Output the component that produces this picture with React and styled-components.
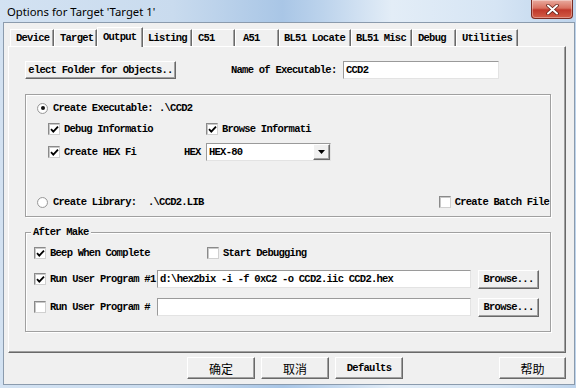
import React from 'react';
import styled, { createGlobalStyle } from 'styled-components';

const MONO = `"Liberation Mono", "DejaVu Sans Mono", monospace`;
const FS = 10.5;
const LS = -0.75;

const Global = createGlobalStyle`
  html, body { margin: 0; padding: 0; width: 576px; height: 388px; overflow: hidden; background: #cddcec; }
  #root { width: 576px; height: 388px; }
  * { box-sizing: border-box; }
`;

const Window = styled.div`
  width: 576px;
  height: 388px;
  display: flex;
  flex-direction: column;
  background: linear-gradient(90deg, #d3e2f2 0%, #c9dbee 30%, #a9c6e6 49%, #bcd3ec 56%, #e3edf7 68%, #d6e5f4 86%, #bed4ec 100%);
`;

const TitleBar = styled.div`
  height: 22px;
  flex-shrink: 0;
  display: flex;
  align-items: flex-start;
`;

const Title = styled.div`
  flex: 1;
  padding-left: 7px;
  font-family: "Noto Sans", "Open Sans", sans-serif;
  font-size: 11.3px;
  line-height: 23px;
  color: #000;
`;

const CloseButton = styled.div`
  width: 42px;
  height: 19px;
  margin-right: 3px;
  border: 1px solid #7a2b22;
  border-top: none;
  border-radius: 0 0 4px 4px;
  background: linear-gradient(180deg, #e9ab9f 0%, #d9705f 45%, #c0392b 55%, #d25d47 100%);
  box-shadow: inset 0 0 0 1px rgba(255, 255, 255, 0.35);
  display: flex;
  align-items: center;
  justify-content: center;
`;

const Client = styled.div`
  flex: 1;
  min-height: 0;
  margin: 0 1px 3px 3px;
  padding: 4px 8px 5px 4px;
  background: #f0f0f0;
  border: 1px solid #8b9bad;
  display: flex;
  flex-direction: column;
`;

const TabRow = styled.div`
  height: 19px;
  flex-shrink: 0;
  display: flex;
  align-items: flex-end;
  padding-left: 2px;
  position: relative;
  z-index: 1;
`;

const Tab = styled.div`
  width: ${(p) => p.$w}px;
  height: ${(p) => (p.$active ? 20 : 17)}px;
  margin-bottom: ${(p) => (p.$active ? -1 : 0)}px;
  padding-left: ${(p) => p.$pad || 5}px;
  padding-top: ${(p) => (p.$active ? 1 : 0)}px;
  background: #f0f0f0;
  border-left: 1px solid #fff;
  border-top: 1px solid #fff;
  border-right: 1px solid #696969;
  box-shadow: inset -1px 0 0 #a0a0a0;
  font-family: ${MONO};
  font-size: ${FS}px;
  letter-spacing: ${LS}px;
  font-weight: bold;
  line-height: 16px;
  color: #000;
  white-space: nowrap;
`;

const Panel = styled.div`
  flex: 1;
  min-height: 0;
  border: 1px solid;
  border-color: #fff #696969 #696969 #fff;
  box-shadow: inset -1px -1px 0 #a0a0a0;
  padding: 14px 14px 0 16px;
  display: flex;
  flex-direction: column;
`;

const Row = styled.div`
  display: flex;
  align-items: center;
  height: ${(p) => p.$h || 16}px;
  margin-top: ${(p) => (p.$auto ? 'auto' : `${p.$mt || 0}px`)};
  margin-left: ${(p) => p.$ml || 0}px;
  flex-shrink: 0;
`;

const Text = styled.span`
  font-family: ${MONO};
  font-size: ${FS}px;
  font-weight: bold;
  letter-spacing: ${LS}px;
  line-height: 16px;
  color: #000;
  white-space: nowrap;
  flex-shrink: 0;
  margin-left: ${(p) => p.$ml || 0}px;
  ${(p) => (p.$w ? `width: ${p.$w}px;` : '')}
`;

const Button = styled.div`
  width: ${(p) => p.$w}px;
  height: ${(p) => p.$h || 18}px;
  margin-left: ${(p) => p.$ml || 0}px;
  flex-shrink: 0;
  background: #f0f0f0;
  border: 1px solid;
  border-color: #fff #696969 #696969 #fff;
  box-shadow: inset -1px -1px 0 #a0a0a0;
  display: flex;
  align-items: center;
  justify-content: center;
  white-space: nowrap;
  font-family: ${(p) => (p.$cjk ? `"Noto Sans CJK SC", "Noto Sans", sans-serif` : MONO)};
  font-size: ${(p) => (p.$cjk ? 12 : FS)}px;
  font-weight: ${(p) => (p.$cjk ? 'normal' : 'bold')};
  letter-spacing: ${(p) => (p.$cjk ? 0 : LS)}px;
  color: #000;
`;

const Field = styled.div`
  width: ${(p) => p.$w}px;
  height: 18px;
  margin-left: ${(p) => p.$ml || 0}px;
  flex-shrink: 0;
  background: #fff;
  border: 1px solid;
  border-color: #9a9a9a #e3e3e3 #e3e3e3 #9a9a9a;
  display: flex;
  align-items: center;
  padding-left: 2px;
  font-family: ${MONO};
  font-size: ${FS}px;
  font-weight: bold;
  letter-spacing: ${LS}px;
  color: #000;
  white-space: nowrap;
`;

const SelectBox = styled(Field)`
  padding-right: 0;
  justify-content: space-between;
`;

const DropButton = styled.div`
  width: 17px;
  height: 16px;
  background: #f0f0f0;
  border: 1px solid;
  border-color: #fff #696969 #696969 #fff;
  box-shadow: inset -1px -1px 0 #a0a0a0;
  display: flex;
  align-items: center;
  justify-content: center;
`;

const Group = styled.div`
  position: relative;
  flex-shrink: 0;
  margin-top: ${(p) => p.$mt || 0}px;
  height: ${(p) => (p.$h ? `${p.$h}px` : 'auto')};
  border: 1px solid #a0a0a0;
  box-shadow: inset 1px 1px 0 #fff, 1px 1px 0 #fff;
  padding: ${(p) => p.$pad};
  display: flex;
  flex-direction: column;
`;

const Legend = styled.span`
  position: absolute;
  top: -8px;
  left: 5px;
  padding: 0 2px;
  background: #f0f0f0;
  font-family: ${MONO};
  font-size: ${FS}px;
  font-weight: bold;
  letter-spacing: ${LS}px;
  line-height: 14px;
  color: #000;
`;

const Item = styled.div`
  display: flex;
  align-items: center;
  gap: 4px;
  flex-shrink: 0;
  ${(p) => (p.$w ? `width: ${p.$w}px;` : '')}
  margin-left: ${(p) => (p.$auto ? 'auto' : `${p.$ml || 0}px`)};
  margin-right: ${(p) => p.$mr || 0}px;
`;

const Box = styled.span`
  width: 12px;
  height: 12px;
  flex-shrink: 0;
  background: #fff;
  border: 1px solid;
  border-color: #8a8a8a #d0d0d0 #d0d0d0 #8a8a8a;
  box-shadow: inset 1px 1px 0 #c8c8c8;
  display: flex;
  align-items: center;
  justify-content: center;
`;

const RadioDot = styled.span`
  width: 11px;
  height: 11px;
  flex-shrink: 0;
  border-radius: 50%;
  background: radial-gradient(circle, #fff 55%, #e6e6e6 100%);
  border: 1px solid #9a9a9a;
  display: flex;
  align-items: center;
  justify-content: center;
  margin-right: 2px;
`;

const Dot = styled.span`
  width: 4px;
  height: 4px;
  border-radius: 50%;
  background: #111;
`;

const Footer = styled.div`
  height: 22px;
  margin-top: 4px;
  flex-shrink: 0;
  display: flex;
  gap: 6px;
  padding-left: 179px;
`;

const Check = ({ checked }) => (
  <Box>
    {checked && (
      <svg width="9" height="9" viewBox="0 0 9 9">
        <path d="M1 4.2 L3.3 6.6 L8 1.6" fill="none" stroke="#000" strokeWidth="1.8" />
      </svg>
    )}
  </Box>
);

const Radio = ({ checked }) => <RadioDot>{checked && <Dot />}</RadioDot>;

const tabs = [
  ['Device', 44, 5],
  ['Target', 43, 5],
  ['Output', 46, 5],
  ['Listing', 49, 4],
  ['C51', 43, 5],
  ['A51', 44, 7],
  ['BL51 Locate', 72, 4],
  ['BL51 Misc', 61, 4],
  ['Debug', 44, 5],
  ['Utilities', 62, 5],
];

export default function App() {
  return (
    <>
      <Global />
      <Window>
        <TitleBar>
          <Title>Options for Target 'Target 1'</Title>
          <CloseButton>
            <svg width="13" height="11" viewBox="0 0 13 11">
              <path d="M2 1.5 L11 9.5 M11 1.5 L2 9.5" stroke="#5a1a12" strokeWidth="3.4" strokeLinecap="round" />
              <path d="M2 1.5 L11 9.5 M11 1.5 L2 9.5" stroke="#fff" strokeWidth="2" strokeLinecap="round" />
            </svg>
          </CloseButton>
        </TitleBar>
        <Client>
          <TabRow>
            {tabs.map(([label, w, pad]) => (
              <Tab key={label} $w={w} $pad={pad} $active={label === 'Output'}>
                {label}
              </Tab>
            ))}
          </TabRow>
          <Panel>
            <Row $h={18}>
              <Button $w={151}>elect Folder for Objects..</Button>
              <Text $ml={55} $w={112}>Name of Executable:</Text>
              <Field $w={156}>CCD2</Field>
            </Row>

            <Group $mt={15} $h={123} $pad="5px 0 6px 11px">
              <Row>
                <Radio checked />
                <Text $ml={3} $w={106}>Create Executable:</Text>
                <Text>.\CCD2</Text>
              </Row>
              <Row $mt={5} $ml={11}>
                <Item $w={158}>
                  <Check checked />
                  <Text>Debug Informatio</Text>
                </Item>
                <Item>
                  <Check checked />
                  <Text>Browse Informati</Text>
                </Item>
              </Row>
              <Row $mt={6} $ml={11} $h={18}>
                <Item $w={136}>
                  <Check checked />
                  <Text>Create HEX Fi</Text>
                </Item>
                <Text $w={22}>HEX</Text>
                <SelectBox $w={125}>
                  HEX-80
                  <DropButton>
                    <svg width="7" height="4" viewBox="0 0 7 4">
                      <path d="M0 0 H7 L3.5 4 Z" fill="#000" />
                    </svg>
                  </DropButton>
                </SelectBox>
              </Row>
              <Row $auto>
                <Radio />
                <Text $ml={3} $w={95}>Create Library:</Text>
                <Text>.\CCD2.LIB</Text>
                <Item $auto $mr={1}>
                  <Check />
                  <Text>Create Batch File</Text>
                </Item>
              </Row>
            </Group>

            <Group $mt={15} $pad="12px 0 15px 8px">
              <Legend>After Make</Legend>
              <Row>
                <Item $w={173}>
                  <Check checked />
                  <Text>Beep When Complete</Text>
                </Item>
                <Item>
                  <Check />
                  <Text>Start Debugging</Text>
                </Item>
              </Row>
              <Row $mt={9} $h={18}>
                <Item $w={123}>
                  <Check checked />
                  <Text>Run User Program #1</Text>
                </Item>
                <Field $w={314}>d:\hex2bix -i -f 0xC2 -o CCD2.iic CCD2.hex</Field>
                <Button $w={61} $h={19} $ml={7}>Browse...</Button>
              </Row>
              <Row $mt={10} $h={18}>
                <Item $w={123}>
                  <Check />
                  <Text>Run User Program #</Text>
                </Item>
                <Field $w={314} />
                <Button $w={61} $h={19} $ml={7}>Browse...</Button>
              </Row>
            </Group>
          </Panel>
          <Footer>
            <Button $w={68} $h={22} $cjk>确定</Button>
            <Button $w={68} $h={22} $cjk>取消</Button>
            <Button $w={68} $h={22}>Defaults</Button>
            <Button $w={67} $h={22} $cjk style={{ marginLeft: 'auto' }}>帮助</Button>
          </Footer>
        </Client>
      </Window>
    </>
  );
}
